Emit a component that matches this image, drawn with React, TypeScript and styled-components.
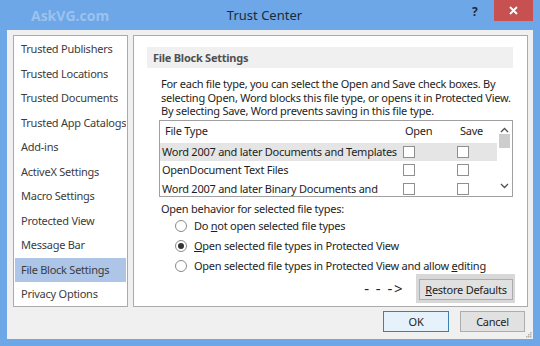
import styled, { createGlobalStyle } from 'styled-components'

const GlobalStyle = createGlobalStyle`
    html, body {
        margin:0;
        padding:0;
    }
    body {
        width:540px;
        height:346px;
        overflow:hidden;
        background:#6ea7e8;
        font-family: "Noto Sans", "Open Sans", sans-serif;
        font-size:11px;
        letter-spacing:-0.25px;
        color:#1e1e1e;
    }
`

const Window = styled.div`
    width:540px;
    height:346px;
    box-sizing:border-box;
    display:flex;
    flex-direction:column;
    background:#6ea7e8;
    padding:0 7px 7px 7px;
`

const TitleBar = styled.div`
    height:30px;
    flex-shrink:0;
    display:flex;
    align-items:center;
`

const Watermark = styled.div`
    margin-left:24px;
    width:76px;
    font-family: "Open Sans", sans-serif;
    font-weight:700;
    font-size:14px;
    letter-spacing:0;
    color:rgba(255,255,255,0.32);
    white-space:nowrap;
`

const Title = styled.div`
    flex:1;
    text-align:center;
    padding-right:50px;
    font-size:13px;
    letter-spacing:0;
    color:#1c2a3a;
`

const HelpButton = styled.div`
    align-self:flex-start;
    margin-top:3px;
    width:22px;
    font-size:12px;
    font-weight:700;
    color:#1c2a3a;
`

const CloseButton = styled.div`
    align-self:flex-start;
    width:39px;
    height:21px;
    background:#c75050;
    display:flex;
    align-items:center;
    justify-content:center;
`

const Body = styled.div`
    flex:1;
    position:relative;
    background:#f0f0f0;
    display:flex;
    flex-direction:column;
    padding:5px 5px 7px 6px;
    min-height:0;
`

const Panels = styled.div`
    flex:1;
    min-height:0;
    display:flex;
    gap:5px;
`

const Nav = styled.ul`
    width:115px;
    box-sizing:border-box;
    margin:0;
    padding:1px;
    list-style:none;
    background:#fff;
    border:1px solid #ababab;
`

const NavItem = styled.li<{ $active?: boolean }>`
    height:24.5px;
    line-height:24.5px;
    padding-left:6px;
    white-space:nowrap;
    overflow:hidden;
    color:#3c3c3c;
    background:${p => p.$active ? '#adc5e7' : 'transparent'};
`

const Panel = styled.div`
    flex:1;
    min-width:0;
    background:#fff;
    border:1px solid #ababab;
    padding:11px 14px 0 13px;
    display:flex;
    flex-direction:column;
`

const SectionHeader = styled.div`
    height:21px;
    line-height:21px;
    padding-left:6px;
    background:#f0f0f0;
    font-weight:700;
    color:#505050;
`

const SectionContent = styled.div`
    padding-left:12px;
    display:flex;
    flex-direction:column;
`

const Description = styled.p`
    margin:9px 0 0 0;
    padding-left:2px;
    line-height:13.5px;
    white-space:nowrap;
`

const Table = styled.div`
    margin-top:2px;
    height:77px;
    box-sizing:border-box;
    border:1px solid #a0a0a0;
    display:flex;
    overflow:hidden;
`

const TableBody = styled.div`
    flex:1;
    min-width:0;
    display:flex;
    flex-direction:column;
`

const Row = styled.div<{ $header?: boolean; $selected?: boolean }>`
    flex-shrink:0;
    height:${p => p.$header ? '22px' : '18.5px'};
    display:grid;
    grid-template-columns:1fr 54px 44px;
    align-items:${p => p.$header ? 'center' : 'start'};
    background:${p => p.$selected ? '#e5e5e5' : 'transparent'};
`

const Cell = styled.div<{ $indent: number }>`
    padding-left:${p => p.$indent}px;
    line-height:18.5px;
    max-height:18.5px;
    overflow:hidden;
`

const CheckCell = styled.div<{ $indent: number }>`
    padding-left:${p => p.$indent}px;
    height:18.5px;
    display:flex;
    align-items:center;
`

const CheckBox = styled.span`
    width:12px;
    height:12px;
    box-sizing:border-box;
    border:1px solid #8f8f8f;
    background:#fff;
`

const ScrollBar = styled.div`
    width:15px;
    flex-shrink:0;
    display:flex;
    flex-direction:column;
    align-items:center;
    padding-top:6px;
`

const Thumb = styled.div`
    width:11px;
    height:14px;
    margin-top:1px;
    background:#cdcdcd;
`

const Spacer = styled.div`
    flex:1;
`

const DownArrow = styled.div`
    margin-bottom:4px;
`

const GroupLabel = styled.div`
    margin-top:5px;
    padding-left:2px;
    line-height:14px;
`

const RadioList = styled.div`
    display:flex;
    flex-direction:column;
    padding-left:16px;
`

const RadioRow = styled.label`
    height:20px;
    display:flex;
    align-items:center;
    gap:7px;
    white-space:nowrap;
`

const Radio = styled.span<{ $checked?: boolean }>`
    width:12px;
    height:12px;
    flex-shrink:0;
    box-sizing:border-box;
    border-radius:50%;
    border:1px solid #8a8a8a;
    background:#fff;
    display:flex;
    align-items:center;
    justify-content:center;
    &::after {
        content:'';
        width:6px;
        height:6px;
        border-radius:50%;
        background:${p => p.$checked ? '#333' : 'transparent'};
    }
`

const RestoreRow = styled.div`
    margin-top:-2px;
    margin-right:-2px;
    display:flex;
    justify-content:flex-end;
    align-items:center;
    gap:12px;
`

const Arrow = styled.span`
    font-size:15px;
    letter-spacing:1.5px;
    color:#222;
`

const Highlight = styled.div`
    background:#d8d8d8;
    padding:5px 2px 3px 3px;
`

const Button = styled.div<{ $default?: boolean; $width: number }>`
    width:${p => p.$width}px;
    height:21px;
    box-sizing:border-box;
    display:flex;
    align-items:center;
    justify-content:center;
    background:${p => p.$default ? '#e5f1fb' : '#e1e1e1'};
    border:1px solid ${p => p.$default ? '#3c7fb1' : '#adadad'};
    color:#1e1e1e;
    white-space:nowrap;
`

const ButtonRow = styled.div`
    margin-top:4px;
    padding-right:3px;
    display:flex;
    justify-content:flex-end;
    gap:11px;
`

const Grip = styled.svg`
    position:absolute;
    right:1px;
    bottom:1px;
`

const navItems = [
    'Trusted Publishers',
    'Trusted Locations',
    'Trusted Documents',
    'Trusted App Catalogs',
    'Add-ins',
    'ActiveX Settings',
    'Macro Settings',
    'Protected View',
    'Message Bar',
    'File Block Settings',
    'Privacy Options',
]

const fileTypes = [
    'Word 2007 and later Documents and Templates',
    'OpenDocument Text Files',
    'Word 2007 and later Binary Documents and Templates',
]

function Chevron({ up }: { up?: boolean }) {
    return (
        <svg width="9" height="6" viewBox="0 0 9 6">
            <path d={up ? 'M1 5 L4.5 1.5 L8 5' : 'M1 1 L4.5 4.5 L8 1'} fill="none" stroke="#505050" strokeWidth="1.3" />
        </svg>
    )
}

export default function App() {
    return (
        <>
            <GlobalStyle />
            <Window>
                <TitleBar>
                    <Watermark>AskVG.com</Watermark>
                    <Title>Trust Center</Title>
                    <HelpButton>?</HelpButton>
                    <CloseButton>
                        <svg width="9" height="9" viewBox="0 0 9 9">
                            <path d="M1 1 L8 8 M8 1 L1 8" stroke="#fff" strokeWidth="1.8" />
                        </svg>
                    </CloseButton>
                </TitleBar>
                <Body>
                    <Panels>
                        <Nav>
                            {navItems.map(item => (
                                <NavItem key={item} $active={item === 'File Block Settings'}>{item}</NavItem>
                            ))}
                        </Nav>
                        <Panel>
                            <SectionHeader>File Block Settings</SectionHeader>
                            <SectionContent>
                                <Description>
                                    For each file type, you can select the Open and Save check boxes. By<br />
                                    selecting Open, Word blocks this file type, or opens it in Protected View.<br />
                                    By selecting Save, Word prevents saving in this file type.
                                </Description>
                                <Table>
                                    <TableBody>
                                        <Row $header>
                                            <Cell $indent={5}>File Type</Cell>
                                            <Cell $indent={6}>Open</Cell>
                                            <Cell $indent={7}>Save</Cell>
                                        </Row>
                                        {fileTypes.map((f, i) => (
                                            <Row key={f} $selected={i === 0}>
                                                <Cell $indent={2}>{f}</Cell>
                                                <CheckCell $indent={4}><CheckBox /></CheckCell>
                                                <CheckCell $indent={4}><CheckBox /></CheckCell>
                                            </Row>
                                        ))}
                                    </TableBody>
                                    <ScrollBar>
                                        <Chevron up />
                                        <Thumb />
                                        <Spacer />
                                        <DownArrow><Chevron /></DownArrow>
                                    </ScrollBar>
                                </Table>
                                <GroupLabel>Open behavior for selected file types:</GroupLabel>
                                <RadioList>
                                    <RadioRow><Radio /><span>Do <u>n</u>ot open selected file types</span></RadioRow>
                                    <RadioRow><Radio $checked /><span><u>O</u>pen selected file types in Protected View</span></RadioRow>
                                    <RadioRow><Radio /><span>Open selected file types in Protected View and allow <u>e</u>diting</span></RadioRow>
                                </RadioList>
                                <RestoreRow>
                                    <Arrow>- - -&gt;</Arrow>
                                    <Highlight>
                                        <Button $width={94}><span><u>R</u>estore Defaults</span></Button>
                                    </Highlight>
                                </RestoreRow>
                            </SectionContent>
                        </Panel>
                    </Panels>
                    <ButtonRow>
                        <Button $default $width={66}>OK</Button>
                        <Button $width={65}>Cancel</Button>
                    </ButtonRow>
                    <Grip width="6" height="6" viewBox="0 0 6 6">
                        <rect x="4" y="0" width="1.5" height="1.5" fill="#b0b0b0" />
                        <rect x="2" y="2" width="1.5" height="1.5" fill="#b0b0b0" />
                        <rect x="4" y="2" width="1.5" height="1.5" fill="#b0b0b0" />
                        <rect x="0" y="4" width="1.5" height="1.5" fill="#b0b0b0" />
                        <rect x="2" y="4" width="1.5" height="1.5" fill="#b0b0b0" />
                        <rect x="4" y="4" width="1.5" height="1.5" fill="#b0b0b0" />
                    </Grip>
                </Body>
            </Window>
        </>
    )
}
